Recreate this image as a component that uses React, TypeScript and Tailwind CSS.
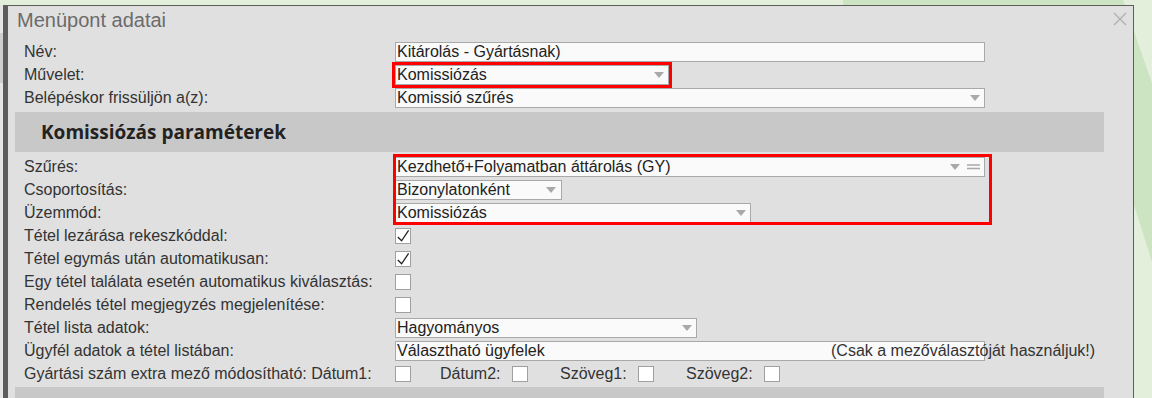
import type { ReactNode } from "react";

function Arrow() {
    return (
        <svg width="10" height="6" viewBox="0 0 10 6" className="shrink-0">
            <path d="M0 0h10L5 6z" fill="#a9a9a9" />
        </svg>
    );
}

function Box({ className, children }: { className: string; children?: ReactNode }) {
    return (
        <div className={`flex h-[20px] shrink-0 items-center border border-[#a9a9a9] bg-[#fafafa] pl-[1px] pr-[4px] text-[16px] leading-[18px] text-[#222] ${className}`}>
            {children}
        </div>
    );
}

function Select({ value, className }: { value: string; className: string }) {
    return (
        <Box className={className}>
            <span className="flex-1 truncate">{value}</span>
            <Arrow />
        </Box>
    );
}

function Check({ checked = false }: { checked?: boolean }) {
    return (
        <div className="h-[16px] w-[16px] shrink-0 border border-[#a0a0a0] bg-white">
            {checked && (
                <svg width="14" height="14" viewBox="0 0 14 14">
                    <path d="M1.8 8 5.6 11.8 12.6 1.4" fill="none" stroke="#222" strokeWidth="1.3" />
                </svg>
            )}
        </div>
    );
}

function Row({ label, children }: { label: string; children?: ReactNode }) {
    return (
        <div className="relative flex h-[23px] items-center">
            <div className="w-[371px] shrink-0 text-[16px] leading-[18px] text-[#333]">{label}</div>
            {children}
        </div>
    );
}

export default function App() {
    return (
        <div className="relative h-[398px] w-[1152px] overflow-hidden bg-[#e3efdb] font-['Liberation_Sans',Arial,sans-serif]">
            {/* background page */}
            <svg className="absolute inset-0" width="1152" height="398" viewBox="0 0 1152 398">
                <polygon points="843,0 1123,0 1152,83 1152,262 1134,205 900,120 843,6" fill="#cce4c1" />
            </svg>

            <div className="relative flex pt-[5px]">
                <div className="h-[400px] w-[3px] bg-[#e6e6e6]">
                    <div className="mt-[28px] h-[50px] bg-[#cfcfcf]" />
                </div>

                {/* dialog */}
                <div className="h-[400px] w-[1131px] border-t border-r border-l-[5px] border-[#5d5d5d] bg-[#e0e0e0]">
                    <div className="flex h-[34px] items-start justify-between pt-[3px] pl-[9px] pr-[6px]">
                        <div className="text-[20px] leading-[23px] text-[#6b6b6b]">Menüpont adatai</div>
                        <svg width="14" height="14" viewBox="0 0 14 14" className="mt-[3px]">
                            <path d="M1 1l12 12M13 1 1 13" stroke="#b0b0b0" strokeWidth="1.4" />
                        </svg>
                    </div>

                    <div className="pl-[16px]">
                        <Row label="Név:">
                            <Box className="w-[590px]">Kitárolás - Gyártásnak)</Box>
                        </Row>
                        <Row label="Művelet:">
                            <Select value="Komissiózás" className="w-[274px] outline-[3px] outline-solid outline-[#ff0000]" />
                        </Row>
                        <Row label="Belépéskor frissüljön a(z):">
                            <Select value="Komissió szűrés" className="w-[590px]" />
                        </Row>
                    </div>

                    <div className="mt-[3px] ml-[7px] flex h-[40px] w-[1089px] items-center bg-[#c8c8c8] pl-[26px] font-['Open_Sans',sans-serif] text-[19px] font-bold text-[#222]">
                        Komissiózás paraméterek
                    </div>

                    <div className="mt-[3px] pl-[16px]">
                        <div className="relative">
                            <Row label="Szűrés:">
                                <Box className="w-[590px]">
                                    <span className="flex-1 truncate">Kezdhető+Folyamatban áttárolás (GY)</span>
                                    <Arrow />
                                    <svg width="13" height="6" viewBox="0 0 13 6" className="ml-[7px] shrink-0">
                                        <path d="M0 1h13M0 4.5h13" stroke="#a9a9a9" strokeWidth="1.6" />
                                    </svg>
                                </Box>
                            </Row>
                            <Row label="Csoportosítás:">
                                <Select value="Bizonylatonként" className="w-[167px] pr-[5px]" />
                            </Row>
                            <Row label="Üzemmód:">
                                <Select value="Komissiózás" className="w-[356px]" />
                            </Row>
                            <div className="pointer-events-none absolute top-[-1px] left-[369px] h-[71px] w-[599px] border-[3px] border-[#ff0000]" />
                        </div>
                        <Row label="Tétel lezárása rekeszkóddal:">
                            <Check checked />
                        </Row>
                        <Row label="Tétel egymás után automatikusan:">
                            <Check checked />
                        </Row>
                        <Row label="Egy tétel találata esetén automatikus kiválasztás:">
                            <Check />
                        </Row>
                        <Row label="Rendelés tétel megjegyzés megjelenítése:">
                            <Check />
                        </Row>
                        <Row label="Tétel lista adatok:">
                            <Select value="Hagyományos" className="w-[302px]" />
                        </Row>
                        <Row label="Ügyfél adatok a tétel listában:">
                            <Box className="w-[590px]">Választható ügyfelek</Box>
                            <span className="absolute left-[807px] text-[16px] leading-[18px] text-[#333]">(Csak a mezőválasztóját használjuk!)</span>
                        </Row>
                        <Row label="Gyártási szám extra mező módosítható: Dátum1:">
                            <Check />
                            <span className="ml-[29px] w-[72px] text-[16px] leading-[18px] text-[#333]">Dátum2:</span>
                            <Check />
                            <span className="ml-[32px] w-[78px] text-[16px] leading-[18px] text-[#333]">Szöveg1:</span>
                            <Check />
                            <span className="ml-[32px] w-[78px] text-[16px] leading-[18px] text-[#333]">Szöveg2:</span>
                            <Check />
                        </Row>
                    </div>

                    <div className="mt-[2px] ml-[7px] h-[40px] w-[1089px] bg-[#c8c8c8]" />
                </div>
            </div>
        </div>
    );
}
